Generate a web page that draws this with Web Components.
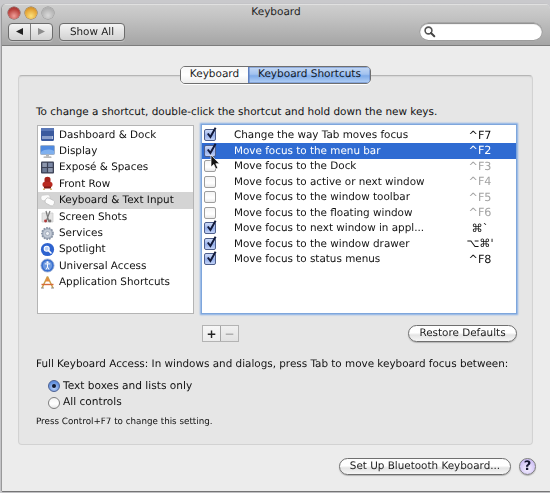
<!DOCTYPE html>
<html><head><meta charset="utf-8">
<style>
html,body{margin:0;padding:0;height:493px;overflow:hidden;background:#c9c9cc}
body{font:10.4px/1.2 "DejaVu Sans",sans-serif;color:#111;text-rendering:geometricPrecision}
kb-window{filter:blur(.42px)}
</style></head><body>
<kb-window>
  <kb-titlebar slot="bar" title="Keyboard"></kb-titlebar>
  <kb-seg></kb-seg>
  <kb-panel>
    <div slot="intro">To change a shortcut, double-click the shortcut and hold down the new keys.</div>
    <kb-list slot="left">
      <kb-item icon="dash">Dashboard &amp; Dock</kb-item>
      <kb-item icon="display">Display</kb-item>
      <kb-item icon="expose">Exposé &amp; Spaces</kb-item>
      <kb-item icon="front">Front Row</kb-item>
      <kb-item icon="keys" selected>Keyboard &amp; Text Input</kb-item>
      <kb-item icon="shots">Screen Shots</kb-item>
      <kb-item icon="services">Services</kb-item>
      <kb-item icon="spot">Spotlight</kb-item>
      <kb-item icon="access">Universal Access</kb-item>
      <kb-item icon="app">Application Shortcuts</kb-item>
    </kb-list>
    <kb-table slot="right">
      <kb-row checked keys="^F7">Change the way Tab moves focus</kb-row>
      <kb-row checked selected keys="^F2">Move focus to the menu bar</kb-row>
      <kb-row dim keys="^F3">Move focus to the Dock</kb-row>
      <kb-row dim keys="^F4">Move focus to active or next window</kb-row>
      <kb-row dim keys="^F5">Move focus to the window toolbar</kb-row>
      <kb-row dim keys="^F6">Move focus to the floating window</kb-row>
      <kb-row checked keys="⌘`">Move focus to next window in appl...</kb-row>
      <kb-row checked keys="⌥⌘'">Move focus to the window drawer</kb-row>
      <kb-row checked keys="^F8">Move focus to status menus</kb-row>
    </kb-table>
    <kb-plusminus slot="pm"></kb-plusminus>
    <kb-button slot="restore" w="109">Restore Defaults</kb-button>
    <div slot="fka">Full Keyboard Access: In windows and dialogs, press Tab to move keyboard focus between:</div>
    <kb-radio slot="r1" on>Text boxes and lists only</kb-radio>
    <kb-radio slot="r2">All controls</kb-radio>
    <div slot="note">Press Control+F7 to change this setting.</div>
  </kb-panel>
  <kb-footer></kb-footer>
</kb-window>
<script>
const def=(n,html)=>{customElements.define(n,class extends HTMLElement{
  constructor(){super();this.attachShadow({mode:'open'});}
  connectedCallback(){this.shadowRoot.innerHTML=typeof html==='function'?html(this):html;}
});};

def('kb-window',`<style>
:host{display:flex;flex-direction:column;width:548px;height:487px;margin:4px 0 0 2px;background:#ececec;border-radius:5px 5px 0 0;box-shadow:0 1px 1px #6d6d6d,-1px 0 1px #9a9a9a;overflow:hidden}
.c{display:flex;flex-direction:column;flex:1;padding:20px 17px 0 16px}
</style><slot name="bar"></slot><div class="c"><slot></slot></div>`);

def('kb-titlebar',t=>`<style>
:host{display:block;height:41px;border-bottom:1px solid #7d7d7d;background:linear-gradient(#cfcfcf,#c4c4c4 30%,#a5a5a5 100%);box-shadow:inset 0 1px 0 #e0e0e0;box-sizing:content-box}
.t{display:grid;grid-template-columns:56px 1fr 56px;height:15px;align-items:center}
.l{display:flex;gap:5px;padding:0 0 0 6px}
.l i{display:block;width:12px;height:12px;border-radius:50%;margin-top:2px}
.r{background:radial-gradient(circle at 50% 75%,#f0a09a,#b9423d 60%,#8c2b28);box-shadow:0 0 0 .5px #7a4a48}
.y{background:radial-gradient(circle at 50% 75%,#fbe07a,#e5a435 60%,#b47a20);box-shadow:0 0 0 .5px #8a6a38}
.g{background:radial-gradient(circle at 50% 70%,#d9d9d9,#b0b0b0 70%);box-shadow:0 0 0 .5px #8d8d8d}
.n{text-align:center;color:#1e1e1e;font-size:10.5px;margin-top:1px}
.b{display:flex;align-items:center;padding:4px 8px 0 6px;height:17px}
.nav{display:flex;width:43px;height:16px;border:1px solid #6c6c6c;border-radius:4px;background:linear-gradient(#f4f4f4,#d2d2d2);box-shadow:0 1px 0 #c2c2c2}
.nav span{flex:1;display:flex;align-items:center;justify-content:center}
.nav span+span{border-left:1px solid #7c7c7c}
.all{margin-left:6px;width:64px;height:16px;border:1px solid #6c6c6c;border-radius:4px;background:linear-gradient(#f4f4f4,#d2d2d2);box-shadow:0 1px 0 #c2c2c2;text-align:center;line-height:16px;font-size:10.4px;color:#222}
.s{margin-left:auto;width:122px;height:17px;border-radius:9px;background:#fff;box-shadow:inset 0 1px 1px #888,0 0 0 .5px #8f8f8f;display:flex;align-items:center;padding-left:3px;box-sizing:border-box}
</style>
<div class="t"><div class="l"><i class="r"></i><i class="y"></i><i class="g"></i></div><div class="n">${t.getAttribute('title')}</div><div></div></div>
<div class="b"><div class="nav"><span><svg width="9" height="9" viewBox="0 0 9 9"><path d="M1 4.5 8 1V8Z" fill="#222"/></svg></span><span><svg width="9" height="9" viewBox="0 0 9 9"><path d="M8 4.5 1 1V8Z" fill="#8d8d8d"/></svg></span></div>
<div class="all">Show All</div>
<div class="s"><svg width="13" height="13" viewBox="0 0 13 13"><circle cx="5.5" cy="5.5" r="3.4" fill="none" stroke="#555" stroke-width="1.6"/><path d="M8 8 11.3 11.3" stroke="#444" stroke-width="2" stroke-linecap="round"/></svg></div></div>`);

def('kb-seg',`<style>
:host{display:flex;justify-content:center;height:18px;margin:0 0 -9px 0;position:relative;z-index:1}
.w{display:flex;height:18px;box-sizing:border-box;border:1px solid #6f6f6f;border-radius:5px;overflow:hidden;box-shadow:0 1px 0 #fff}
span{display:block;text-align:center;line-height:15px;font-size:10.5px}
.a{width:67px;background:linear-gradient(#f8f8f8,#fff 50%,#ededed);color:#222}
.b{width:121px;border-left:1px solid #5d7fc0;background:linear-gradient(#c4d8f4,#a2c2ef 45%,#7fabe8 55%,#b3d0f6);color:#10182a;box-shadow:inset 0 0 0 .5px #5d7fc0}
</style><div class="w"><span class="a">Keyboard</span><span class="b">Keyboard Shortcuts</span></div>`);

def('kb-panel',`<style>
:host{display:flex;flex-direction:column;height:370px;box-sizing:border-box;background:#e6e6e6;border:1px solid #d2d2d2;border-top:1px solid #b5b5b5;border-radius:4px;padding:30px 15px 0 17px;box-shadow:inset 0 1px 1px #d6d6d6}
.intro{font-size:10.45px;height:18px}
.lists{display:grid;grid-template-columns:157px 316px;column-gap:7px;height:190px;margin-left:1px}
.acts{display:flex;justify-content:space-between;align-items:flex-start;margin:11px 0 0 166px}
.fka{margin-top:16px;font-size:10.4px;height:16px;white-space:nowrap}
.rs{display:flex;flex-direction:column;gap:2.5px;padding:5px 0 0 12px}
.note{font-size:8.75px;margin-top:7px}
</style>
<div class="intro"><slot name="intro"></slot></div>
<div class="lists"><slot name="left"></slot><slot name="right"></slot></div>
<div class="acts"><slot name="pm"></slot><slot name="restore"></slot></div>
<div class="fka"><slot name="fka"></slot></div>
<div class="rs"><slot name="r1"></slot><slot name="r2"></slot></div>
<div class="note"><slot name="note"></slot></div>`);

def('kb-list',`<style>:host{display:block;margin-top:1px;padding-top:.6px;background:#fff;border:1px solid #b4b4b4;box-sizing:border-box;height:189px}</style><slot></slot>`);

const I={
dash:`<rect x="1" y="1" width="13" height="13" rx="1.5" fill="#3b5a9e"/><rect x="1" y="1" width="13" height="3" fill="#5a78b8"/><rect x="2" y="9" width="11" height="3" fill="#b8c6e4"/><path d="M3 9v3M5 9v3M7 9v3M9 9v3M11 9v3" stroke="#3b5a9e" stroke-width=".7"/>`,
display:`<rect x=".5" y="1.5" width="14" height="9" rx="1" fill="#4f8ae0"/><rect x=".5" y="1.5" width="14" height="9" rx="1" fill="none" stroke="#9fb0c8"/><path d="M1 8c4-3 9-3 13-1v3H1Z" fill="#7fb0ee"/><rect x="6" y="10.5" width="3" height="2" fill="#b5b5b5"/><rect x="3.5" y="12.5" width="8" height="1.3" rx=".6" fill="#a5a5a5"/>`,
expose:`<rect x="1" y="1.5" width="13" height="12" rx="1" fill="#3c4256"/><rect x="2.3" y="2.8" width="4.6" height="4.2" fill="#8d97ad"/><rect x="8.1" y="2.8" width="4.6" height="4.2" fill="#7b88a5"/><rect x="2.3" y="8" width="4.6" height="4.2" fill="#6f7c96"/><rect x="8.1" y="8" width="4.6" height="4.2" fill="#8d97ad"/>`,
front:`<path d="M4.5 3c0-3 6-3 6 0v4h-6Z" fill="#a8231b"/><rect x="2.5" y="6" width="10" height="5" rx="2" fill="#b92a20"/><rect x="4" y="10.5" width="7" height="2" fill="#7d1a14"/><path d="M4 12.5v1.5M11 12.5v1.5" stroke="#c9a04a" stroke-width="1.4"/>`,
keys:`<rect x="1" y="2" width="9" height="5.5" rx="2" fill="#fafafa" stroke="#c9c9c9" stroke-width=".7" transform="rotate(-6 5 5)"/><rect x="5" y="6" width="9.5" height="6" rx="2.4" fill="#fdfdfd" stroke="#bbb" stroke-width=".7" transform="rotate(28 10 9)"/>`,
shots:`<path d="M2 4h11v9H2Z" fill="#e4e4e4" stroke="#c8c8c8" stroke-width=".7"/><path d="M6 2l3 11M10 2 6 13" stroke="#7a7a7a" stroke-width="1.2"/><circle cx="5.5" cy="12" r="1.4" fill="#b23b3b"/><circle cx="10" cy="12" r="1.4" fill="#777"/>`,
services:`<circle cx="7.5" cy="7.5" r="5.6" fill="#a4aebd" stroke="#8792a4" stroke-width="1.6" stroke-dasharray="1.7 1"/><circle cx="7.5" cy="7.5" r="4" fill="#c2cad6"/><circle cx="7.5" cy="7.5" r="2" fill="#edf0f4" stroke="#8a94a6" stroke-width=".6"/>`,
spot:`<circle cx="7.5" cy="7.5" r="6.6" fill="#2e63cf"/><circle cx="6.7" cy="6.7" r="2.5" fill="#b9d0f5" stroke="#fff" stroke-width="1.1"/><path d="M8.6 8.6 11 11" stroke="#fff" stroke-width="1.6" stroke-linecap="round"/>`,
access:`<circle cx="7.5" cy="7.5" r="6.6" fill="#3a70cf" stroke="#a9b9d6" stroke-width=".8"/><circle cx="7.5" cy="7.5" r="4.6" fill="#6e9ae0"/><circle cx="7.5" cy="4.3" r="1.1" fill="#fff"/><path d="M4.8 5.9h5.4M7.5 6v3M7.5 9 6 11.6M7.5 9 9 11.6" stroke="#fff" stroke-width="1" fill="none"/>`,
app:`<path d="M7.5 1.5 2 13M7.5 1.5 13 13" stroke="#c9a04a" stroke-width="1.5" fill="none"/><path d="M1.5 9.5H13.5" stroke="#d66b3a" stroke-width="1.4"/><path d="M5.2 6.5 7.5 2 9.8 6.5Z" fill="#e6893d"/><path d="M1 13h3M11 13h3" stroke="#8f8f8f" stroke-width="1.2"/>`
};
def('kb-item',t=>`<style>
:host{display:flex;align-items:center;height:16.4px;padding-left:2px;gap:4px;font-size:10.4px;white-space:nowrap;${t.hasAttribute('selected')?'background:#d4d4d4;':''}}
svg{flex:none}
</style><svg width="15" height="15" viewBox="0 0 15 15">${I[t.getAttribute('icon')]}</svg><slot></slot>`);

def('kb-table',`<style>:host{display:block;background:#fff;height:190px;box-sizing:border-box;padding-top:2.7px;border:1px solid #7ea6dc;box-shadow:0 0 1.5px 1px #86aee6;position:relative}
.cur{position:absolute;left:8px;top:29px;z-index:2}</style><slot></slot>
<svg class="cur" width="12" height="17" viewBox="0 0 12 17"><path d="M1 1V13L3.8 10.4 5.8 15 7.8 14.1 5.8 9.7H9.5Z" fill="#111" stroke="#fff" stroke-width=".7"/></svg>`);

def('kb-row',t=>{const c=t.hasAttribute('checked'),s=t.hasAttribute('selected'),d=t.hasAttribute('dim');
return `<style>
:host{display:grid;grid-template-columns:30px 1fr 68px;align-items:center;height:15.5px;padding-left:2px;font-size:10.4px;white-space:nowrap;${s?'background:#2f6bd2;color:#fff;':''}}
.b{display:block;width:12px;height:12px;position:relative;box-sizing:border-box;border:1px solid ${c?'#4e5f8c':'#9d9d9d'};border-radius:2px;background:${c?'linear-gradient(#cfdcf8,#97b1ec 55%,#c2d2f6)':'linear-gradient(#f4f4f4,#fff 60%,#e9e9e9)'}}
svg{position:absolute;left:0;top:-4px}
.k{text-align:center;padding-right:4px;font-size:11.2px;${d?'color:#a3a3a3;':''}}
</style><span class="b">${c?'<svg width="13" height="14" viewBox="0 0 13 14"><path d="M2.8 7.5 5.4 11 10.6 1.8" fill="none" stroke="#11193a" stroke-width="2"/></svg>':''}</span><span><slot></slot></span><span class="k">${t.getAttribute('keys')}</span>`;});

def('kb-plusminus',`<style>
:host{display:flex;width:37px;height:17px;box-sizing:border-box;border:1px solid #b3b3b3;background:linear-gradient(#f0f0f0,#e2e2e2);font-weight:700}
span{flex:1;display:flex;align-items:center;justify-content:center;font-size:12px;line-height:1}
.a{color:#222;border-right:1px solid #a5a5a5;background:linear-gradient(#f7f7f7,#ececec)}.b{color:#aaa}
</style><span class="a">+</span><span class="b">−</span>`);

def('kb-button',t=>`<style>
:host{display:inline-block;width:${t.getAttribute('w')}px;height:17px;box-sizing:border-box;border:1px solid #6f6f6f;border-radius:9px;background:linear-gradient(#fdfdfd,#fff 45%,#e4e4e4 60%,#f6f6f6);box-shadow:0 1px 1px #b5b5b5;text-align:center;font-size:10.4px;line-height:15px;white-space:nowrap;color:#1c1c1c}
</style><slot></slot>`);

def('kb-radio',t=>{const on=t.hasAttribute('on');return `<style>
:host{display:flex;align-items:center;gap:3px;height:14px;font-size:10.6px}
i{display:flex;align-items:center;justify-content:center;width:12px;height:12px;box-sizing:border-box;border-radius:50%;border:1px solid ${on?'#4a5f92':'#7d7d7d'};background:${on?'radial-gradient(circle at 50% 70%,#bcd1f6,#5f8ede 70%)':'linear-gradient(#f4f4f4,#fff 60%,#e6e6e6)'}}
b{display:block;width:4px;height:4px;border-radius:50%;background:#10182f}
</style><i>${on?'<b></b>':''}</i><slot></slot>`;});

def('kb-footer',`<style>
:host{display:flex;justify-content:flex-end;align-items:center;gap:8px;margin-top:13px;margin-right:-3px}
.h{width:17px;height:17px;box-sizing:border-box;border-radius:50%;border:1px solid #7b7b7b;background:radial-gradient(circle at 50% 65%,#f6f2ff,#d2c4f6 65%,#bcaaea);text-align:center;font:700 13px/15px "DejaVu Sans",sans-serif;color:#15152f;box-shadow:0 1px 1px #b5b5b5}
</style><kb-button w="172">Set Up Bluetooth Keyboard...</kb-button><div class="h">?</div>`);
</script>
</body></html>
